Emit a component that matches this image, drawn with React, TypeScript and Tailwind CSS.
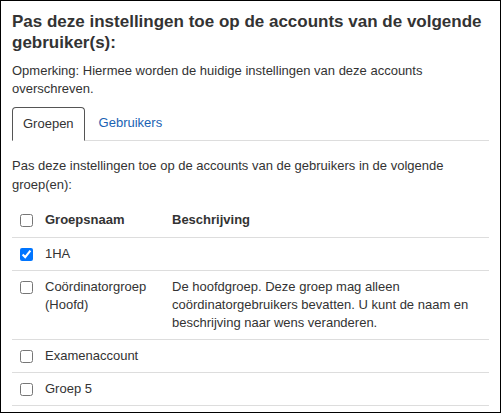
const groups = [
  { name: "1HA", description: "", checked: true },
  {
    name: "Coördinatorgroep (Hoofd)",
    description:
      "De hoofdgroep. Deze groep mag alleen coördinatorgebruikers bevatten. U kunt de naam en beschrijving naar wens veranderen.",
    checked: false,
  },
  { name: "Examenaccount", description: "", checked: false },
  { name: "Groep 5", description: "", checked: false },
];

const App = () => {
  return (
    <div
      className="h-[413px] w-[501px] overflow-hidden border border-black bg-white px-[11px] pt-[10px] text-[13px] leading-[18px] text-[#333]"
      style={{ fontFamily: '"Liberation Sans", Arial, sans-serif' }}
    >
      <h2 className="text-[17px] font-bold leading-[21px]">
        Pas deze instellingen toe op de accounts van de volgende gebruiker(s):
      </h2>
      <p className="mt-[9px]">Opmerking: Hiermee worden de huidige instellingen van deze accounts overschreven.</p>

      <div className="mt-[9px] flex border-b border-[#ddd]">
        <div className="-mb-px rounded-t-[4px] border border-b-white border-[#555] px-[10px] py-[7px]">Groepen</div>
        <div className="px-[14px] py-[7px] text-[#1a62b3]">Gebruikers</div>
      </div>

      <p className="mt-[15px] leading-[19px]">
        Pas deze instellingen toe op de accounts van de gebruikers in de volgende groep(en):
      </p>

      <table className="mt-[9px] w-full border-collapse">
        <thead>
          <tr className="border-b border-[#ddd]">
            <th className="w-[33px] py-[8px] pl-[8px] text-left align-middle">
              <input type="checkbox" className="m-0 block size-[13px]" />
            </th>
            <th className="w-[127px] py-[8px] text-left font-bold">Groepsnaam</th>
            <th className="py-[8px] text-left font-bold">Beschrijving</th>
          </tr>
        </thead>
        <tbody>
          {groups.map((group) => (
            <tr key={group.name} className="border-b border-[#ddd]">
              <td className="py-[7px] pl-[8px] align-top">
                <input type="checkbox" defaultChecked={group.checked} className="m-0 mt-[3px] block size-[13px]" />
              </td>
              <td className="py-[7px] pr-[10px] align-top">{group.name}</td>
              <td className="py-[7px] pr-[8px] align-top">{group.description}</td>
            </tr>
          ))}
        </tbody>
      </table>
    </div>
  );
};

export default App;
